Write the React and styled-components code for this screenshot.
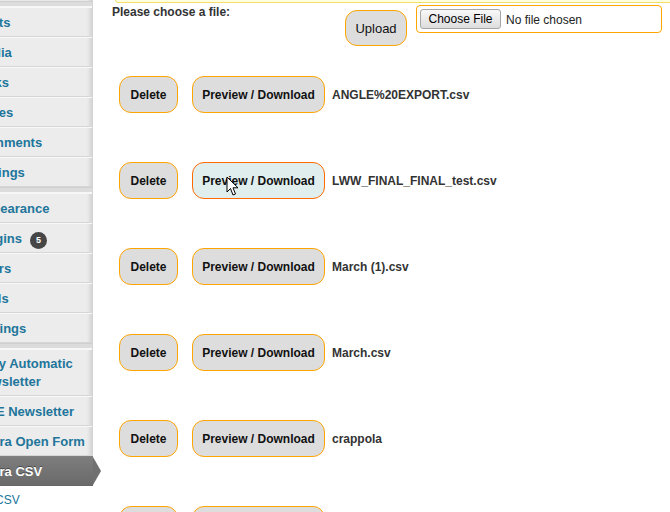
import React from "react";
import styled, { createGlobalStyle, css } from "styled-components";

const Global = createGlobalStyle`
  html, body { margin: 0; padding: 0; background: #fff; overflow: hidden; }
  body { font-family: "Liberation Sans", Arial, sans-serif; }
  * { box-sizing: border-box; }
`;

const Page = styled.div`
  display: flex;
  width: 670px;
  height: 512px;
  overflow: hidden;
`;

const Sidebar = styled.nav`
  flex: 0 0 93px;
  width: 93px;
  padding-top: 1px;
  background: #ececec;
  border-right: 1px solid #d4d4d4;
  box-shadow: inset -4px 0 4px -2px rgba(0, 0, 0, 0.12);
  position: relative;
  z-index: 2;
`;

const Separator = styled.div`
  height: 6px;
  background: #dcdcdc;
  border-top: 1px solid #cfcfcf;
  border-bottom: 1px solid #f6f6f6;
`;

const MenuEntry = styled.div`
  position: relative;
`;

const MenuLink = styled.a`
  display: block;
  overflow: hidden;
  border-top: 1px solid #f8f8f8;
  border-bottom: 1px solid #d6d6d6;
  color: #21759b;
  font-size: 13px;
  font-weight: bold;
  text-decoration: none;
  ${(p) =>
    p.$multi
      ? css`
          padding: 5px 0 4px;
          line-height: 18px;
        `
      : css`
          height: 30px;
          line-height: 30px;
        `}
  ${(p) =>
    p.$active &&
    css`
      margin-right: -1px;
      background: linear-gradient(#7d7d7d, #6a6a6a);
      border-top-color: #808080;
      border-bottom-color: #666;
      color: #fff;
      text-shadow: 0 -1px 0 rgba(0, 0, 0, 0.4);
    `}
`;

const MenuLabel = styled.span`
  display: block;
  width: 118px;
  margin-left: -25px;
  white-space: normal;
`;

const Badge = styled.span`
  display: inline-block;
  vertical-align: 0;
  margin-left: 8px;
  min-width: 17px;
  height: 17px;
  padding: 0 5px;
  border-radius: 9px;
  background: #464646;
  color: #fff;
  font-size: 9px;
  font-weight: bold;
  line-height: 17px;
  text-align: center;
  text-shadow: none;
`;

const Arrow = styled.span`
  position: absolute;
  top: 1px;
  right: -9px;
  width: 0;
  height: 0;
  border-left: 8px solid #707070;
  border-top: 14px solid transparent;
  border-bottom: 14px solid transparent;
`;

const Submenu = styled.div`
  background: #fff;
  margin-right: -1px;
  padding: 7px 0 20px;
`;

const SubLink = styled.a`
  display: block;
  overflow: hidden;
  color: #21759b;
  font-size: 12px;
  line-height: 14px;
  text-decoration: none;
  span {
    display: block;
    margin-left: -29px;
    white-space: nowrap;
  }
`;

const Main = styled.main`
  flex: 1;
  min-width: 0;
  padding-left: 19px;
  position: relative;
`;

const Notice = styled.div`
  margin: -20px -20px 0 3px;
  height: 23px;
  background: #ffffe0;
  border: 1px solid #f0e06a;
  border-radius: 3px;
`;

const UploadForm = styled.form`
  display: flex;
  align-items: flex-start;
  margin-top: 2px;
`;

const FormLabel = styled.label`
  flex: 0 0 233px;
  font-size: 12px;
  font-weight: bold;
  line-height: 14px;
  color: #333;
`;

const RoundButton = styled.button`
  height: ${(p) => (p.$tall ? 37 : 36)}px;
  padding: 0 10px;
  border: 1px solid ${(p) => (p.$hover ? "#ff6a00" : "#ffa500")};
  border-radius: 12px;
  background: ${(p) => (p.$hover ? "#e0eeee" : "#dddddd")};
  color: #111;
  font-family: "Liberation Sans", Arial, sans-serif;
  font-size: ${(p) => (p.$plain ? "13px" : "12px")};
  font-weight: ${(p) => (p.$plain ? "normal" : "bold")};
  cursor: pointer;
  position: relative;
  flex: 0 0 auto;
`;

const UploadButton = styled(RoundButton)`
  margin-top: 5px;
  width: 62px;
  padding: 0;
`;

const FileBox = styled.label`
  margin-left: 9px;
  width: 246px;
  height: 28px;
  padding: 3px;
  border: 1px solid #ffa500;
  border-radius: 4px;
  display: flex;
  align-items: center;
  font-size: 12px;
  color: #222;
  input { display: none; }
`;

const ChooseButton = styled.span`
  width: 81px;
  height: 20px;
  border: 1px solid #a6a6a6;
  border-radius: 3px;
  background: linear-gradient(#f8f8f8, #dddddd);
  color: #000;
  font-size: 12px;
  line-height: 19px;
  text-align: center;
`;

const FileStatus = styled.span`
  margin-left: 5px;
  padding-top: 1px;
`;

const FileList = styled.div`
  display: flex;
  flex-direction: column;
  gap: 49px;
  margin-top: 30px;
  padding-left: 7px;
`;

const FileRow = styled.div`
  display: flex;
  align-items: center;
`;

const DeleteButton = styled(RoundButton)`
  width: 59px;
  padding: 0;
`;

const PreviewButton = styled(RoundButton)`
  margin-left: 14px;
  width: 133px;
  padding: 0;
`;

const FileName = styled.span`
  margin-left: 7px;
  font-size: 12px;
  font-weight: bold;
  color: #333;
  white-space: nowrap;
`;

const Cursor = styled.svg`
  position: absolute;
  left: 33px;
  top: 13px;
  width: 13px;
  height: 21px;
  pointer-events: none;
`;

const menu = [
  { sep: true },
  { label: "Posts" },
  { label: "Media" },
  { label: "Links" },
  { label: "Pages" },
  { label: "Comments" },
  { label: "Listings" },
  { sep: true },
  { label: "Appearance" },
  { label: "Plugins", badge: 5 },
  { label: "Users" },
  { label: "Tools" },
  { label: "Settings" },
  { sep: true },
  { label: "Daily Automatic Newsletter", multi: true },
  { label: "WPE Newsletter" },
  { label: "Hydra Open Form" },
  { label: "Hydra CSV", active: true },
];

const files = [
  "ANGLE%20EXPORT.csv",
  "LWW_FINAL_FINAL_test.csv",
  "March (1).csv",
  "March.csv",
  "crappola",
  "notes.csv",
];

export default function App() {
  return (
    <>
      <Global />
      <Page>
        <Sidebar>
          {menu.map((m, i) =>
            m.sep ? (
              <Separator key={i} />
            ) : (
              <MenuEntry key={i}>
                <MenuLink href="#" $multi={m.multi} $active={m.active}>
                  <MenuLabel>
                    {m.label}
                    {m.badge && <Badge>{m.badge}</Badge>}
                  </MenuLabel>
                </MenuLink>
                {m.active && <Arrow />}
              </MenuEntry>
            )
          )}
          <Submenu>
            <SubLink href="#">
              <span>Edit CSV</span>
            </SubLink>
          </Submenu>
        </Sidebar>
        <Main>
          <Notice />
          <UploadForm onSubmit={(e) => e.preventDefault()}>
            <FormLabel>Please choose a file:</FormLabel>
            <UploadButton type="submit" $plain>
              Upload
            </UploadButton>
            <FileBox>
              <input type="file" />
              <ChooseButton>Choose File</ChooseButton>
              <FileStatus>No file chosen</FileStatus>
            </FileBox>
          </UploadForm>
          <FileList>
            {files.map((f, i) => (
              <FileRow key={f}>
                <DeleteButton $tall>Delete</DeleteButton>
                <PreviewButton $tall $hover={i === 1}>
                  Preview / Download
                  {i === 1 && (
                    <Cursor viewBox="0 0 13 21">
                      <path
                        d="M1 1 L1 16 L4.5 12.5 L7 19 L9.5 18 L7 11.8 L12 11.8 Z"
                        fill="#fff"
                        stroke="#000"
                        strokeWidth="1"
                        strokeLinejoin="round"
                      />
                    </Cursor>
                  )}
                </PreviewButton>
                <FileName>{f}</FileName>
              </FileRow>
            ))}
          </FileList>
        </Main>
      </Page>
    </>
  );
}
